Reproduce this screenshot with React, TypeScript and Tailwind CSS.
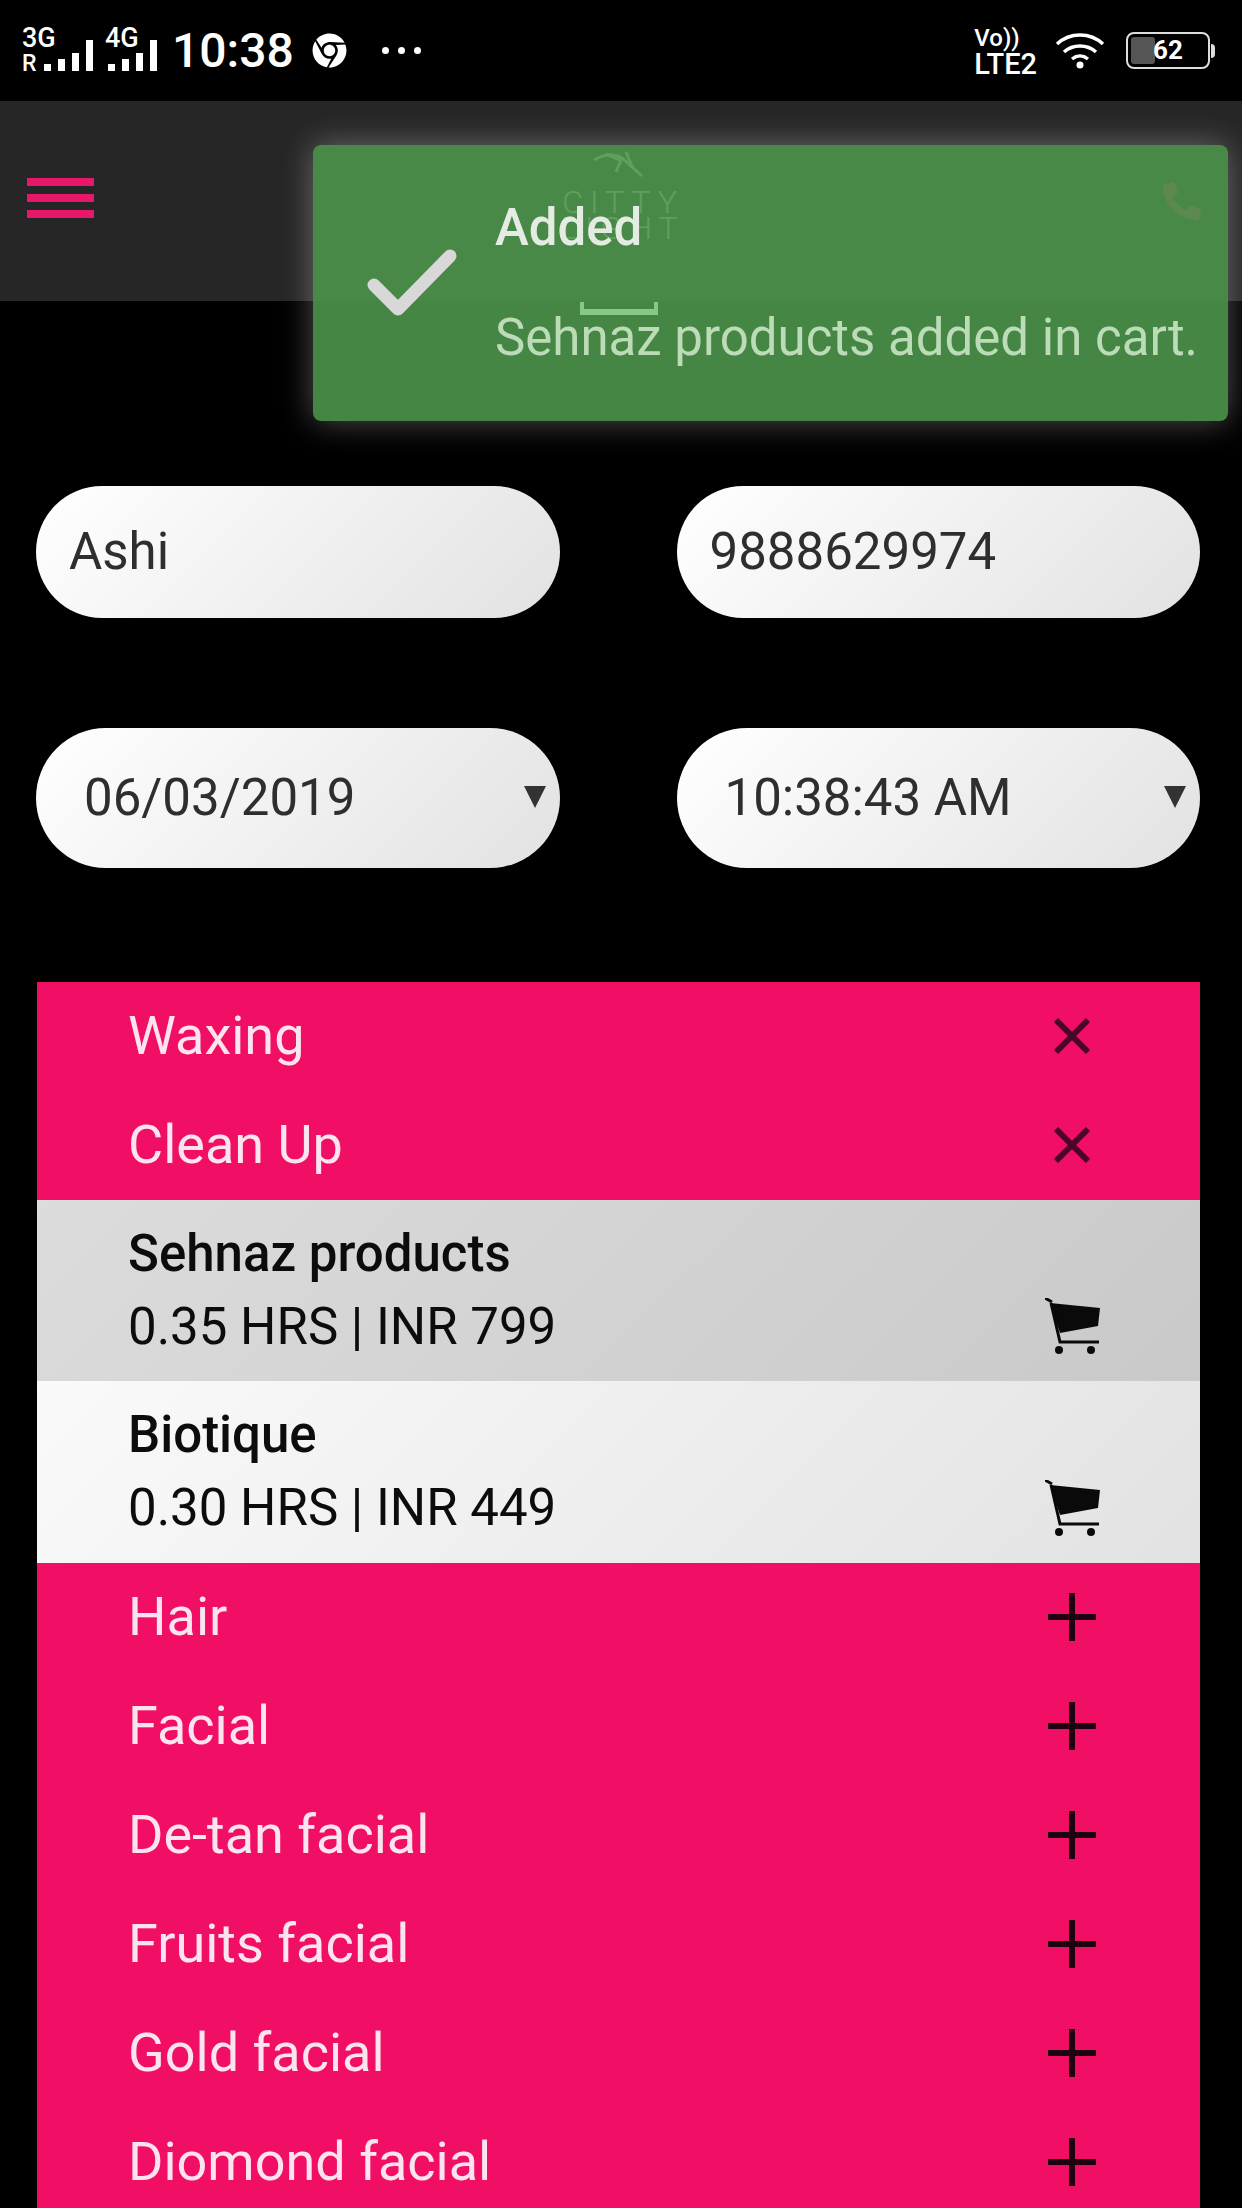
import { FaChrome, FaPhoneAlt } from 'react-icons/fa'

function Signal({ className }: { className: string }) {
  return (
    <svg width="56" height="32" viewBox="0 0 56 32" fill="white" aria-hidden="true" className={`flex-none ${className}`}>
      <rect x="4" y="25" width="7" height="7" />
      <rect x="18" y="20" width="7" height="12" />
      <rect x="32" y="14" width="7" height="18" />
      <rect x="46" y="1" width="7" height="31" />
    </svg>
  )
}

function Pill({ children, wide }: { children: string; wide?: boolean }) {
  return (
    <div
      className={`flex items-center rounded-full bg-[linear-gradient(135deg,#ffffff,#e2e2e2)] text-[51px] text-[#2e2e2e] ${
        wide ? 'h-[140px] justify-between pl-[48px] pr-[14px]' : 'h-[132px] pl-[33px]'
      }`}
    >
      <span>{children}</span>
      {wide && <span className="mb-[2px] h-0 w-0 border-x-[11px] border-t-[22px] border-x-transparent border-t-[#333]" />}
    </div>
  )
}

function PinkRow({ label, open }: { label: string; open?: boolean }) {
  return (
    <div className="flex h-[109px] items-center justify-between pb-[2px] pl-[91px] text-[54px] text-[#fbe4ee]">
      <span>{label}</span>
      {open ? (
        <svg width="38" height="38" viewBox="0 0 38 38" stroke="#4a0626" strokeWidth="6" aria-hidden="true" className="mr-[109px]">
          <path d="M3 3l32 32M35 3L3 35" />
        </svg>
      ) : (
        <svg width="48" height="48" viewBox="0 0 48 48" stroke="#1f0210" strokeWidth="6" aria-hidden="true" className="mr-[104px]">
          <path d="M24 0v48M0 24h48" />
        </svg>
      )}
    </div>
  )
}

function CartIcon() {
  return (
    <svg width="56" height="57" viewBox="0 0 56 57" aria-hidden="true">
      <path d="M0 0l7 4" stroke="#0a0a0a" strokeWidth="3" fill="none" />
      <path d="M5 5l50 5-2 18-38 7z" fill="#0a0a0a" />
      <path d="M6 5l9 39h39" stroke="#0a0a0a" strokeWidth="3" fill="none" />
      <circle cx="14" cy="52" r="4" fill="#0a0a0a" />
      <circle cx="46" cy="52" r="4" fill="#0a0a0a" />
    </svg>
  )
}

function ProductRow({ name, info, className }: { name: string; info: string; className: string }) {
  return (
    <div className={`flex items-end justify-between pl-[91px] pr-[99px] ${className}`}>
      <div className="self-center pb-[2px] text-[51px] leading-[73px] text-[#0c0c0c]">
        <div className="font-medium">{name}</div>
        <div>{info}</div>
      </div>
      <div className="mb-[26px]">
        <CartIcon />
      </div>
    </div>
  )
}

export default function App() {
  return (
    <div className="relative h-[2208px] w-[1242px] overflow-hidden bg-black font-['Roboto',sans-serif]">
      {/* status bar */}
      <div className="flex h-[101px] items-center justify-between pl-[22px] pr-[32px] text-white">
        <div className="flex items-center">
          <div className="flex h-[50px] items-end">
            <div className="w-[35px] font-medium leading-[25px]">
              <div className="text-[27px]">3G</div>
              <div className="text-[23px]">R</div>
            </div>
            <Signal className="-ml-[17px] mb-[5px]" />
          </div>
          <div className="ml-[9px] flex h-[50px] items-end">
            <div className="h-[50px] w-[36px] text-[27px] font-medium leading-[25px]">4G</div>
            <Signal className="-ml-[37px] mb-[5px]" />
          </div>
          <span className="ml-[12px] text-[48px] font-medium">10:38</span>
          <FaChrome className="ml-[18px] text-[35px]" />
          <div className="ml-[35px] flex gap-[9px]">
            <div className="h-[7px] w-[7px] rounded-full bg-white" />
            <div className="h-[7px] w-[7px] rounded-full bg-white" />
            <div className="h-[7px] w-[7px] rounded-full bg-white" />
          </div>
        </div>
        <div className="flex items-center">
          <div className="font-medium">
            <div className="text-[24px] leading-[26px]">Vo))</div>
            <div className="text-[29px] leading-[26px]">LTE2</div>
          </div>
          <svg width="50" height="38" viewBox="0 0 50 38" fill="none" stroke="white" strokeWidth="3.5" className="ml-[18px]" aria-hidden="true">
            <path d="M2 12c13-12 33-12 46 0M9 20c9-8 23-8 32 0M17 27c5-4 11-4 16 0" />
            <circle cx="25" cy="33" r="3.5" fill="white" stroke="none" />
          </svg>
          <div className="relative ml-[21px] flex h-[37px] w-[84px] items-center justify-center rounded-[8px] border-2 border-[#ddd]">
            <div className="absolute inset-y-[3px] left-[3px] w-[24px] rounded-[3px] bg-[#555]" />
            <span className="relative text-[26px] font-bold">62</span>
            <span className="absolute -right-[7px] h-[14px] w-[4px] rounded-r bg-[#ddd]" />
          </div>
        </div>
      </div>

      {/* header behind the toast */}
      <div className="relative flex h-[200px] justify-between bg-[#262626] pl-[27px] pr-[41px] pt-[77px]">
        <div className="flex h-[40px] w-[67px] flex-col justify-between">
          <div className="h-[8px] bg-[#e5186a]" />
          <div className="h-[8px] bg-[#e5186a]" />
          <div className="h-[8px] bg-[#e5186a]" />
        </div>
        <svg width="54" height="28" viewBox="0 0 54 28" fill="none" stroke="white" strokeWidth="3" className="absolute left-[592px] top-[49px]" aria-hidden="true">
          <path d="M2 10c10-6 20-7 28-2l20 18M14 4l14 6M30 8l-6 14M34 2l6 14" />
        </svg>
        <div className="absolute left-[558px] top-[88px] w-[130px] text-center text-[32px] font-light leading-[26px] tracking-[7px] text-white">
          <div>CITTY</div>
          <div>LIGHT</div>
        </div>
        <FaPhoneAlt className="mt-[4px] text-[38px] text-[#e5186a]" />
      </div>

      {/* toast */}
      <div className="absolute left-[313px] top-[145px] flex h-[276px] w-[915px] items-center rounded-[8px] bg-[#4e954c]/90 shadow-[0_0_32px_rgba(255,255,255,0.32)]">
        <div className="absolute left-[267px] top-[157px] h-[13px] w-[78px] border-x-[4px] border-b-[6px] border-[#86c987]" />
        <svg width="90" height="68" viewBox="0 0 90 68" fill="none" stroke="#d8d8d8" strokeWidth="13" strokeLinecap="round" strokeLinejoin="round" className="relative ml-[54px]" aria-hidden="true">
          <path d="M7 36l24 24L83 7" />
        </svg>
        <div className="relative ml-[38px]">
          <div className="text-[51px] font-medium leading-[60px] text-[#e4ebe2]">Added</div>
          <div className="mt-[50px] text-[51px] leading-[60px] text-[#bcdcb8]">Sehnaz products added in cart.</div>
        </div>
      </div>

      {/* form */}
      <div className="mt-[185px] grid grid-cols-2 items-center gap-x-[117px] gap-y-[110px] pl-[36px] pr-[42px]">
        <Pill>Ashi</Pill>
        <Pill>9888629974</Pill>
        <Pill wide>06/03/2019</Pill>
        <Pill wide>10:38:43 AM</Pill>
      </div>

      {/* service list */}
      <div className="ml-[37px] mt-[114px] w-[1163px] bg-[#f10f66]">
        <PinkRow label="Waxing" open />
        <PinkRow label="Clean Up" open />
        <ProductRow name="Sehnaz products" info="0.35 HRS | INR 799" className="h-[181px] bg-[linear-gradient(135deg,#dcdcdc,#c9c9c9)]" />
        <ProductRow name="Biotique" info="0.30 HRS | INR 449" className="h-[182px] bg-[linear-gradient(135deg,#fafafa,#e2e2e2)]" />
        <PinkRow label="Hair" />
        <PinkRow label="Facial" />
        <PinkRow label="De-tan facial" />
        <PinkRow label="Fruits facial" />
        <PinkRow label="Gold facial" />
        <PinkRow label="Diomond facial" />
      </div>
    </div>
  )
}
